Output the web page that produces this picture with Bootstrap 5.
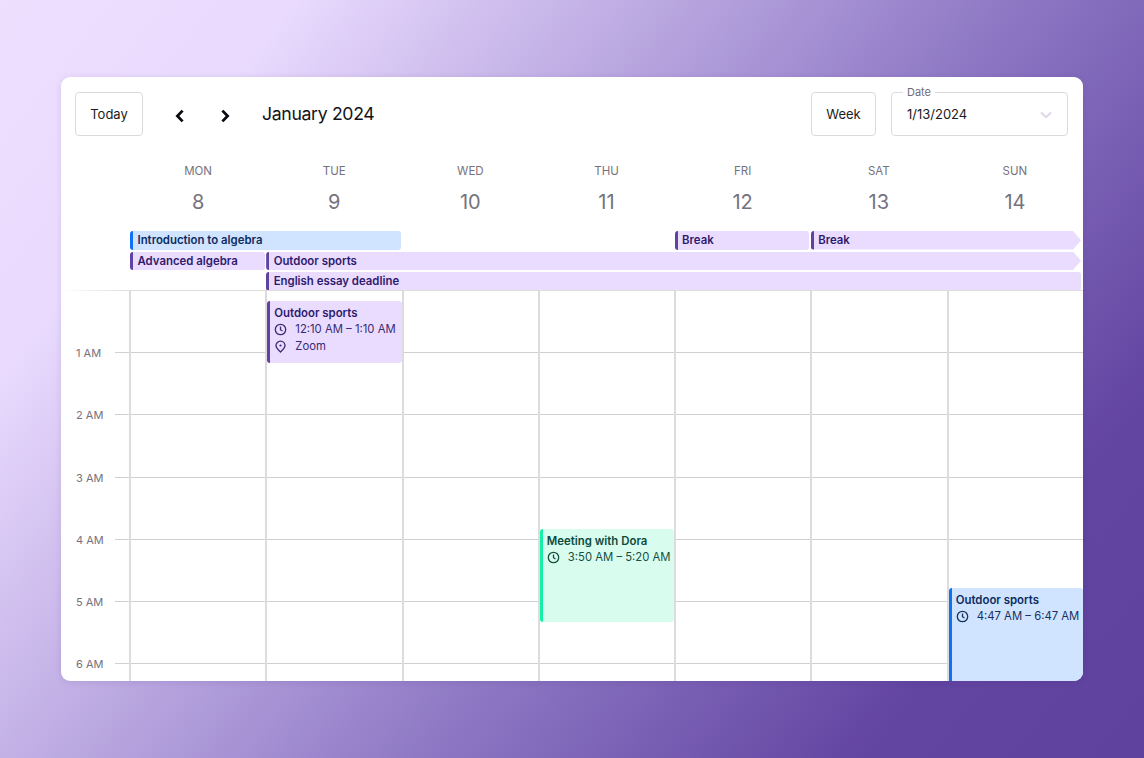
<!DOCTYPE html>
<html lang="en">
<head>
<meta charset="utf-8">
<title>Calendar</title>
<link href="https://cdn.jsdelivr.net/npm/bootstrap@5.3.0/dist/css/bootstrap.min.css" rel="stylesheet">
<style>
html,body{height:100%;}
body{margin:0;font-family:Inter,"Liberation Sans",sans-serif;background:linear-gradient(128deg,#eedfff 0%,#e9dafe 17%,#8f79c5 58%,#6244a1 84%,#5f429e 100%);padding:77px 61px;overflow:hidden;}
.cal-shell{height:604px;width:1022px;border:0;border-radius:9px;overflow:hidden;background:#fff;box-shadow:0 1px 6px rgba(60,30,110,.12);}
.cal-top{padding:15px 15px 0 14px;height:74px;}
.cal-btn{height:44px;border:1.5px solid #dad9de;border-radius:4px;background:#fff;color:#1c1b20;font-size:13px;padding:0;line-height:1;}
.cal-btn-today{width:68px;}
.cal-btn-week{width:65px;margin-right:15px;}
.cal-nav{width:45px;height:44px;border:0;background:none;padding:0;}
.cal-navs{margin-left:14px;}
.cal-title{font-size:17.7px;letter-spacing:-.35px;margin-left:15px;color:#131217;font-weight:400;margin-bottom:0;height:44px;}
.cal-date{width:177px;height:44px;border:1.5px solid #dad9de;border-radius:4px;padding:1px 15px 0;font-size:13px;color:#1c1b20;position:relative;}
.cal-date-label{position:absolute;left:11px;top:-8px;background:#fff;padding:0 4px;font-size:11px;line-height:14px;color:#6f6c78;}
.cal-gutter{width:69px;flex:none;}
.cal-days{display:grid;grid-template-columns:repeat(7,1fr);flex:1;}
.cal-head{height:80px;}
.cal-dow{font-size:11.5px;line-height:14px;color:#75727d;padding-top:13px;}
.cal-num{font-size:20px;line-height:24px;color:#75727d;margin-top:12px;}
.cal-allday{display:grid;grid-template-columns:repeat(7,1fr);grid-auto-rows:18.5px;row-gap:2px;margin-left:69px;height:59px;}
.ad{font-size:11.4px;font-weight:600;line-height:18px;padding-left:4.5px;white-space:nowrap;overflow:hidden;border-radius:3px;margin-right:1.5px;}
.ad-last{margin-right:2px;clip-path:polygon(0 0,calc(100% - 8px) 0,100% 50%,calc(100% - 8px) 100%,0 100%);}
.tone-v{background:#e9dcff;color:#2f1b6d;border-left:3px solid #5f43a2;}
.tone-b{background:#d0e4ff;color:#0d2c5f;border-left:3px solid #0f72f5;}
.tone-g{background:#d8fcee;color:#0c4b3d;border-left:3px solid #14f0a8;}
.cal-body{height:391px;background:linear-gradient(90deg,#fff 0,#dcdcdc 69px,#dcdcdc 100%) top/100% 1px no-repeat;}
.cal-body .cal-days{margin-left:-1px;}
.cal-hour{height:62.2px;position:relative;font-size:11px;color:#75727d;line-height:14px;}
.cal-hour:first-child{margin-top:1px;}
.cal-hour span{position:absolute;left:15px;bottom:-7px;}
.cal-hour::after{content:"";position:absolute;right:0;bottom:0;width:15px;height:1px;background:#d0d0d2;}
.cal-col{position:relative;border-left:2px solid #dcdcde;background:repeating-linear-gradient(180deg,transparent 0,transparent 61.2px,#d0d0d2 61.2px,#d0d0d2 62.2px) 0 1px;}
.ev{position:absolute;left:0;right:0;border-radius:3px;padding:4px 0 0 4px;}
.ev-t{font-weight:600;font-size:11.4px;line-height:16px;white-space:nowrap;}
.ev-r{line-height:17.5px;white-space:nowrap;font-weight:400;display:flex;align-items:center;gap:8px;font-size:11.3px;}
.ev-r svg{flex:none;}
.tone-v .ev-r{color:#3a2a72;}
.tone-b .ev-r{color:#17305f;}
.tone-g .ev-r{color:#154f42;}
</style>
</head>
<body>
<div class="card cal-shell">
  <div class="d-flex align-items-start cal-top">
    <button class="btn cal-btn cal-btn-today" type="button">Today</button>
    <div class="d-flex cal-navs">
      <button class="cal-nav" type="button" aria-label="Previous"><svg width="10" height="14" viewBox="0 0 10 14"><path d="M7.6 1.6 2.4 7l5.2 5.4" fill="none" stroke="#0b0b10" stroke-width="2.8"/></svg></button>
      <button class="cal-nav" type="button" aria-label="Next"><svg width="10" height="14" viewBox="0 0 10 14"><path d="M2.4 1.6 7.6 7l-5.2 5.4" fill="none" stroke="#0b0b10" stroke-width="2.8"/></svg></button>
    </div>
    <div class="cal-title h5 d-flex align-items-center">January 2024</div>
    <button class="btn cal-btn cal-btn-week ms-auto" type="button">Week</button>
    <div class="cal-date d-flex align-items-center justify-content-between">
      <span class="cal-date-label">Date</span>
      <span>1/13/2024</span>
      <svg width="12" height="8" viewBox="0 0 12 8"><path d="M1 1.5 6 6.2l5-4.7" fill="none" stroke="#ddd6e6" stroke-width="2"/></svg>
    </div>
  </div>
  <div class="d-flex cal-head">
    <div class="cal-gutter"></div>
    <div class="cal-days text-center">
      <div><div class="cal-dow">MON</div><div class="cal-num">8</div></div>
      <div><div class="cal-dow">TUE</div><div class="cal-num">9</div></div>
      <div><div class="cal-dow">WED</div><div class="cal-num">10</div></div>
      <div><div class="cal-dow">THU</div><div class="cal-num">11</div></div>
      <div><div class="cal-dow">FRI</div><div class="cal-num">12</div></div>
      <div><div class="cal-dow">SAT</div><div class="cal-num">13</div></div>
      <div><div class="cal-dow">SUN</div><div class="cal-num">14</div></div>
    </div>
  </div>
  <div class="cal-allday">
    <div class="ad tone-b" style="grid-column:1 / span 2;grid-row:1">Introduction to algebra</div>
    <div class="ad tone-v" style="grid-column:5;grid-row:1">Break</div>
    <div class="ad ad-last tone-v" style="grid-column:6 / span 2;grid-row:1">Break</div>
    <div class="ad tone-v" style="grid-column:1;grid-row:2">Advanced algebra</div>
    <div class="ad ad-last tone-v" style="grid-column:2 / span 6;grid-row:2">Outdoor sports</div>
    <div class="ad tone-v" style="grid-column:2 / span 6;grid-row:3;margin-right:2px">English essay deadline</div>
  </div>
  <div class="d-flex cal-body">
    <div class="cal-gutter">
      <div class="cal-hour"><span>1 AM</span></div>
      <div class="cal-hour"><span>2 AM</span></div>
      <div class="cal-hour"><span>3 AM</span></div>
      <div class="cal-hour"><span>4 AM</span></div>
      <div class="cal-hour"><span>5 AM</span></div>
      <div class="cal-hour"><span>6 AM</span></div>
    </div>
    <div class="cal-days">
      <div class="cal-col"></div>
      <div class="cal-col">
        <div class="ev tone-v" style="top:10.5px;height:62px">
          <div class="ev-t">Outdoor sports</div>
          <div class="ev-r"><svg width="13" height="13" viewBox="0 0 13 13"><circle cx="6.5" cy="6.5" r="5.2" fill="none" stroke="currentColor" stroke-width="1.3"/><path d="M6.5 3.4v3.3l2 1.3" fill="none" stroke="currentColor" stroke-width="1.3"/></svg>12:10 AM – 1:10 AM</div>
          <div class="ev-r"><svg width="13" height="13" viewBox="0 0 13 13"><path d="M6.5 12C4.3 10 2 8 2 5.6a4.5 4.5 0 0 1 9 0C11 8 8.700 10 6.500 12Z" fill="none" stroke="currentColor" stroke-width="1.3"/><circle cx="6.500" cy="5.500" r="1.100" fill="currentColor"/></svg>Zoom</div>
        </div>
      </div>
      <div class="cal-col"></div>
      <div class="cal-col">
        <div class="ev tone-g" style="top:238.500px;height:93px">
          <div class="ev-t">Meeting with Dora</div>
          <div class="ev-r"><svg width="13" height="13" viewBox="0 0 13 13"><circle cx="6.5" cy="6.5" r="5.2" fill="none" stroke="currentColor" stroke-width="1.3"/><path d="M6.5 3.4v3.3l2 1.3" fill="none" stroke="currentColor" stroke-width="1.3"/></svg>3:50 AM – 5:20 AM</div>
        </div>
      </div>
      <div class="cal-col"></div>
      <div class="cal-col"></div>
      <div class="cal-col">
        <div class="ev tone-b" style="top:297.500px;height:124px">
          <div class="ev-t">Outdoor sports</div>
          <div class="ev-r"><svg width="13" height="13" viewBox="0 0 13 13"><circle cx="6.5" cy="6.5" r="5.2" fill="none" stroke="currentColor" stroke-width="1.3"/><path d="M6.5 3.4v3.3l2 1.3" fill="none" stroke="currentColor" stroke-width="1.3"/></svg>4:47 AM – 6:47 AM</div>
        </div>
      </div>
    </div>
  </div>
</div>
<script src="https://cdn.jsdelivr.net/npm/bootstrap@5.3.0/dist/js/bootstrap.bundle.min.js"></script>
</body>
</html>
